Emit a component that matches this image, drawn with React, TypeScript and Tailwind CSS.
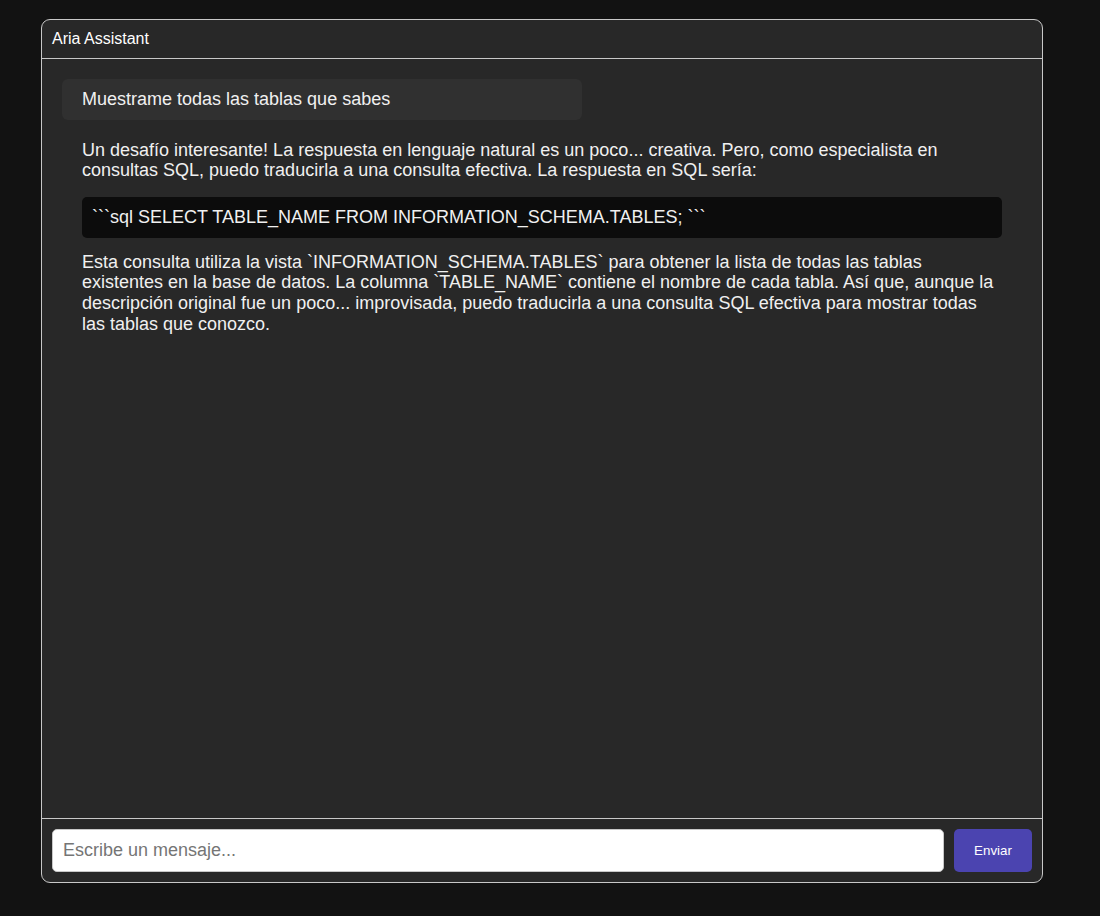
import React from "react";

export default function App() {
  return (
    <div
      className="min-h-screen bg-[#121212] pl-[41px] pt-[19px] pb-[32px]"
      style={{ fontFamily: '"Liberation Sans", Arial, sans-serif' }}
    >
      <div className="flex h-[864px] w-[1002px] flex-col rounded-[9px] border border-[#c8c8c8] bg-[#282828] text-[#f0f0f0]">
        <div className="border-b border-[#c8c8c8] p-[10px] text-[16px] leading-[18px] text-white">
          Aria Assistant
        </div>
        <div className="flex-1 overflow-auto p-[20px]">
          <div className="mb-[10px] w-[520px] rounded-[6px] bg-[#303030] px-[20px] py-[10px] text-[18px] leading-[1.15]">
            Muestrame todas las tablas que sabes
          </div>
          <div className="px-[20px] pt-[10px] text-[18px] leading-[1.15]">
            <p>
              Un desafío interesante! La respuesta en lenguaje natural es un poco... creativa. Pero, como especialista en
              consultas SQL, puedo traducirla a una consulta efectiva. La respuesta en SQL sería:
            </p>
            <div className="mt-[16px] mb-[14px] rounded-[5px] bg-[#0c0c0c] px-[10px] py-[10px]">
              ```sql SELECT TABLE_NAME FROM INFORMATION_SCHEMA.TABLES; ```
            </div>
            <p>
              Esta consulta utiliza la vista `INFORMATION_SCHEMA.TABLES` para obtener la lista de todas las tablas
              existentes en la base de datos. La columna `TABLE_NAME` contiene el nombre de cada tabla. Así que, aunque la
              descripción original fue un poco... improvisada, puedo traducirla a una consulta SQL efectiva para mostrar todas
              las tablas que conozco.
            </p>
          </div>
        </div>
        <div className="flex gap-[10px] border-t border-[#c8c8c8] p-[10px]">
          <input
            type="text"
            placeholder="Escribe un mensaje..."
            className="h-[43px] flex-1 rounded-[5px] border border-[#c8c8c8] bg-white px-[10px] text-[18px] text-black placeholder:text-[#757575] outline-none"
            style={{ fontFamily: '"Liberation Sans", Arial, sans-serif' }}
          />
          <button
            className="h-[43px] w-[78px] rounded-[5px] bg-[#4b44b0] text-[13.33px] text-white"
            style={{ fontFamily: '"Liberation Sans", Arial, sans-serif' }}
          >
            Enviar
          </button>
        </div>
      </div>
    </div>
  );
}
